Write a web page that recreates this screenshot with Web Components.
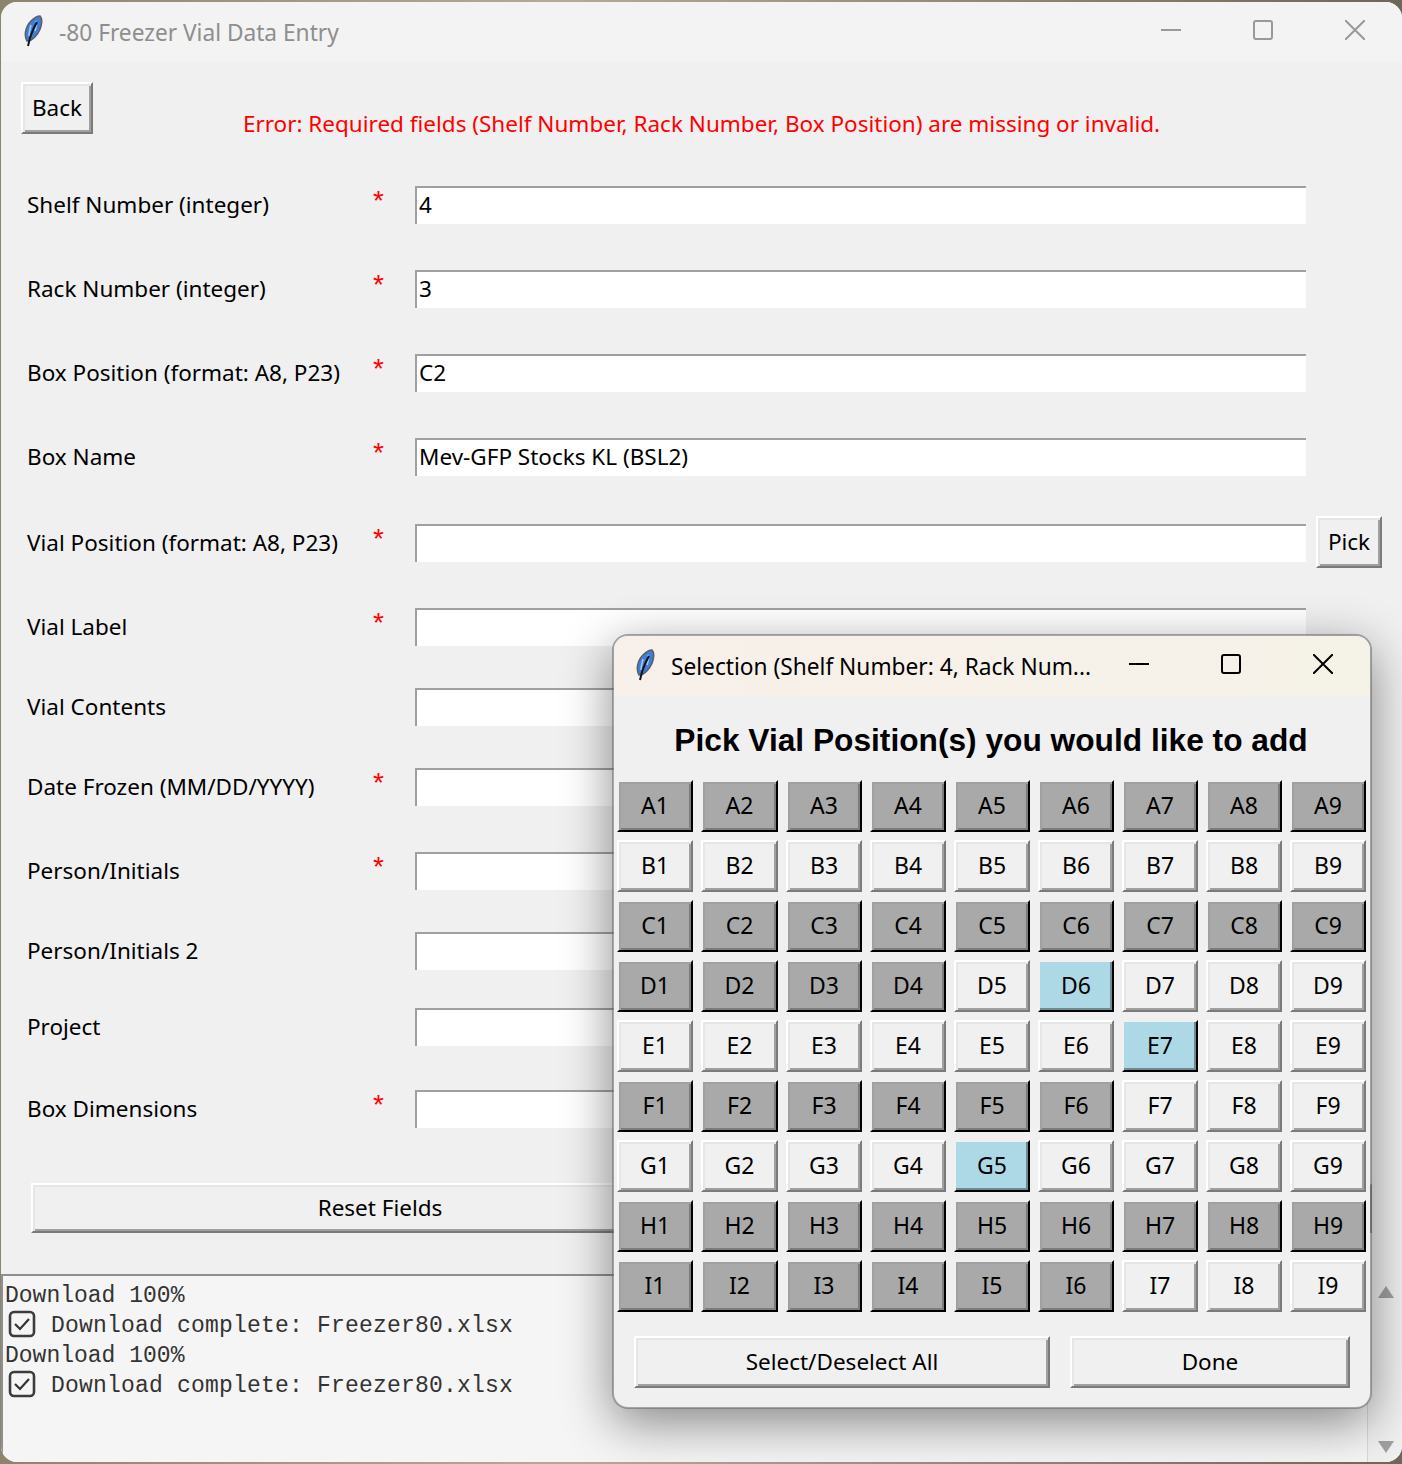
<!DOCTYPE html>
<html>
<head>
<meta charset="utf-8">
<title>-80 Freezer Vial Data Entry</title>
<style>
    html, body {
        margin: 0;
        height: 100%;
    }

    body {
        /* desktop wallpaper that peeks out round the window corners */
        background: linear-gradient(90deg, #8d8470, #b3ab98 40%, #6e6656);
        font-family: "Noto Sans", "Liberation Sans", sans-serif;
        font-size: 22.5px;
        overflow: hidden;
    }
</style>
</head>
<body>
<app-window>
    <title-bar slot="title" text="-80 Freezer Vial Data Entry" inactive></title-bar>

    <page-header slot="main" message="Error: Required fields (Shelf Number, Rack Number, Box Position) are missing or invalid."></page-header>

    <form-row slot="main" label="Shelf Number (integer)" value="4" required style="--row: 84px"></form-row>
    <form-row slot="main" label="Rack Number (integer)" value="3" required style="--row: 84px"></form-row>
    <form-row slot="main" label="Box Position (format: A8, P23)" value="C2" required style="--row: 84px"></form-row>
    <form-row slot="main" label="Box Name" value="Mev-GFP Stocks KL (BSL2)" required style="--row: 86px"></form-row>
    <form-row slot="main" label="Vial Position (format: A8, P23)" required style="--row: 84px">
        <win-button slot="action" style="width: 66px; height: 52px">Pick</win-button>
    </form-row>
    <form-row slot="main" label="Vial Label" required style="--row: 80px"></form-row>
    <form-row slot="main" label="Vial Contents" style="--row: 80px"></form-row>
    <form-row slot="main" label="Date Frozen (MM/DD/YYYY)" required style="--row: 84px"></form-row>
    <form-row slot="main" label="Person/Initials" required style="--row: 80px"></form-row>
    <form-row slot="main" label="Person/Initials 2" style="--row: 76px"></form-row>
    <form-row slot="main" label="Project" style="--row: 82px"></form-row>
    <form-row slot="main" label="Box Dimensions" required style="--row: 93px"></form-row>

    <action-row slot="main">
        <win-button style="width: 698px; height: 50px">Reset Fields</win-button>
        <win-button style="flex: 1; height: 50px"></win-button>
    </action-row>

    <log-panel slot="log"></log-panel>

    <vial-dialog slot="overlay"></vial-dialog>
</app-window>

<script>
// the tk feather icon, used in both title bars
const FEATHER_SVG = `
    <svg viewBox="0 0 20 32" width="20" height="32" aria-hidden="true">
        <path d="M4 26 C1 21 2 12 8 6 C11 3 14 1 17 1 C19 3 19 7 18 11 C17 16 13 22 8 25 C7 26 5 26 4 26 Z"
              fill="#3f7fd6" stroke="#5a5f68" stroke-width="1.6"/>
        <path d="M8 10 C7 14 6 18 6 21 M13 6 C14 9 13 13 12 16" stroke="#a4c6f0" stroke-width="1.6" fill="none"/>
        <path d="M5 31 L7 23 C9 17 11 12 14 7" stroke="#10161f" stroke-width="2" fill="none"/>
    </svg>`;

// (ROOT) the main window, everything else is slotted into it
class AppWindow extends HTMLElement {
    constructor() {
        super();
        this.attachShadow({ mode: 'open' });
        this.shadowRoot.innerHTML = `
        <style>
            :host {
                display: flex;
                flex-direction: column;
                position: relative;
                height: 1460px;
                margin: 2px 0 2px 1px;
                background: #f0f0f0;
                border-radius: 16px;
                overflow: hidden;
                color: #000;
            }

            main {
                flex: 1;
                padding: 20px 0 0 0;
            }
        </style>

        <slot name="title"></slot>
        <main><slot name="main"></slot></main>
        <slot name="log"></slot>
        <slot name="overlay"></slot>
        `;
    }
}

// window caption with icon, text and the three controls
class TitleBar extends HTMLElement {
    constructor() {
        super();
        this.attachShadow({ mode: 'open' });
        this.shadowRoot.innerHTML = `
        <style>
            :host {
                display: flex;
                align-items: center;
                flex: none;
                height: 60px;
                padding: 0 37px 0 22px;
                background: #f3f3f3;
                color: #000;
                font-size: 22.7px;
                --ctl: #000;
            }

            :host([inactive]) {
                color: #8e8e8e;
                --ctl: #999;
            }

            :host([dialog]) {
                padding-left: 21px;
                background: linear-gradient(90deg, #f8f0ea, #f5f2e8);
            }

            .icon {
                flex: none;
                width: 20px;
                height: 32px;
                transform: translateY(-1px);
            }

            .text {
                margin-left: 16px;
                white-space: nowrap;
            }

            .controls {
                display: flex;
                gap: 72px;
                margin-left: auto;
                transform: translateY(-2px);
            }

            svg.ctl {
                display: block;
                width: 20px;
                height: 20px;
                fill: none;
                stroke: var(--ctl);
                stroke-width: 2;
            }
        </style>

        <span class="icon">${FEATHER_SVG}</span>
        <span class="text"></span>
        <div class="controls">
            <svg class="ctl" viewBox="0 0 20 20"><path d="M0 10 H20"/></svg>
            <svg class="ctl" viewBox="0 0 20 20"><rect x="1" y="1" width="18" height="18" rx="2"/></svg>
            <svg class="ctl" viewBox="0 0 20 20"><path d="M0 0 L20 20 M20 0 L0 20"/></svg>
        </div>
        `;
    }

    connectedCallback() {
        this.shadowRoot.querySelector('.text').textContent = this.getAttribute('text');
    }
}

// tk style raised button, tone can be normal (default), used or picked
class WinButton extends HTMLElement {
    constructor() {
        super();
        this.attachShadow({ mode: 'open' });
        this.shadowRoot.innerHTML = `
        <style>
            :host {
                display: flex;
                align-items: center;
                justify-content: center;
                box-sizing: border-box;
                padding-bottom: 2px;
                background: #f0f0f0;
                border: 2px solid;
                border-color: #fff #7a7a7a #7a7a7a #fff;
                box-shadow: inset 2px 2px 0 #e6e6e6, inset -2px -2px 0 #a0a0a0;
                color: #000;
                white-space: nowrap;
            }

            :host([tone="used"]) {
                background: #a9a9a9;
                border-color: #f0f0f0 #000 #000 #f0f0f0;
                box-shadow: inset 2px 2px 0 #a0a0a0, inset -2px -2px 0 #7c7c7c;
            }

            :host([tone="picked"]) {
                background: #add8e6;
                border-color: #f0f0f0 #000 #000 #f0f0f0;
                box-shadow: inset -2px -2px 0 #6f8a93;
            }
        </style>

        <slot></slot>
        `;
    }
}

// back button and the validation message, the message is centred on the whole window
class PageHeader extends HTMLElement {
    constructor() {
        super();
        this.attachShadow({ mode: 'open' });
        this.shadowRoot.innerHTML = `
        <style>
            :host {
                display: grid;
                grid-template-rows: 52px;
                height: 52px;
                margin-bottom: 52px;
            }

            win-button, .error {
                grid-area: 1 / 1;
            }

            win-button {
                justify-self: start;
                margin-left: 20px;
                width: 72px;
            }

            .error {
                justify-self: center;
                margin-top: 26px;
                color: #f00;
                white-space: nowrap;
            }
        </style>

        <win-button>Back</win-button>
        <div class="error"></div>
        `;
    }

    connectedCallback() {
        this.shadowRoot.querySelector('.error').textContent = this.getAttribute('message');
    }
}

// one label / asterisk / entry line of the form
class FormRow extends HTMLElement {
    constructor() {
        super();
        this.attachShadow({ mode: 'open' });
        this.shadowRoot.innerHTML = `
        <style>
            :host {
                display: grid;
                grid-template-columns: 345px 43px 891px 66px;
                grid-template-rows: 38px;
                align-items: center;
                height: var(--row);
                padding-left: 26px;
            }

            .label {
                margin-top: -2px;
            }

            .star {
                color: #f00;
                font-size: 28px;
                font-family: "Liberation Sans", sans-serif;
                transform: translate(1px, -4px);
            }

            .entry {
                box-sizing: border-box;
                height: 38px;
                padding-left: 2px;
                line-height: 34px;
                background: #fff;
                border-top: 2px solid #a0a0a0;
                border-left: 2px solid #a0a0a0;
                white-space: nowrap;
            }

            .action {
                margin-left: 10px;
                width: 66px;
            }

            ::slotted(win-button) {
                margin-top: -2px;
            }
        </style>

        <div class="label"></div>
        <div class="star"></div>
        <div class="entry"></div>
        <div class="action"><slot name="action"></slot></div>
        `;
    }

    connectedCallback() {
        this.shadowRoot.querySelector('.label').textContent = this.getAttribute('label');
        this.shadowRoot.querySelector('.entry').textContent = this.getAttribute('value') || '';
        this.shadowRoot.querySelector('.star').textContent = this.hasAttribute('required') ? '*' : '';
    }
}

// the reset / submit line below the form
class ActionRow extends HTMLElement {
    constructor() {
        super();
        this.attachShadow({ mode: 'open' });
        this.shadowRoot.innerHTML = `
        <style>
            :host {
                display: flex;
                gap: 8px;
                width: 1341px;
                margin-left: 30px;
            }
        </style>

        <slot></slot>
        `;
    }
}

// download console at the bottom of the window, with its scrollbar
class LogPanel extends HTMLElement {
    constructor() {
        super();

        const check = `
            <svg viewBox="0 0 28 28" width="28" height="28" aria-hidden="true">
                <rect x="2" y="2" width="24" height="24" rx="4" fill="none" stroke="#3c3c3c" stroke-width="2.6"/>
                <path d="M7 14 L12 19 L21 9" fill="none" stroke="#333" stroke-width="2.2"/>
            </svg>`;

        this.attachShadow({ mode: 'open' });
        this.shadowRoot.innerHTML = `
        <style>
            :host {
                display: flex;
                flex: none;
                height: 188px;
            }

            .text {
                flex: 1;
                box-sizing: border-box;
                padding: 5px 0 0 2px;
                background: #f5f5f5;
                border-top: 2px solid #8f8f8f;
                border-left: 2px solid #8f8f8f;
                border-right: 1px solid #d8d8d8;
                font-family: "Liberation Mono", monospace;
                font-size: 23px;
                line-height: 30px;
                color: #333;
            }

            .line {
                display: flex;
                align-items: center;
                height: 30px;
                white-space: pre;
            }

            .line span {
                letter-spacing: 0.2px;
            }

            .line svg {
                flex: none;
                margin: -4px 15px 0 3px;
            }

            .scrollbar {
                display: flex;
                flex-direction: column;
                justify-content: space-between;
                align-items: center;
                box-sizing: border-box;
                flex: none;
                width: 34px;
                padding: 12px 0 9px 1px;
                background: #f0f0f0;
            }

            svg.arrow {
                display: block;
                fill: #a0a0a0;
            }
        </style>

        <div class="text">
            <div class="line">Download 100%</div>
            <div class="line">${check}<span>Download complete: Freezer80.xlsx</span></div>
            <div class="line">Download 100%</div>
            <div class="line">${check}<span>Download complete: Freezer80.xlsx</span></div>
        </div>
        <div class="scrollbar">
            <svg class="arrow" viewBox="0 0 16 12" width="16" height="12"><path d="M8 0 L16 12 H0 Z"/></svg>
            <svg class="arrow" viewBox="0 0 16 12" width="16" height="12"><path d="M0 0 H16 L8 12 Z"/></svg>
        </div>
        `;
    }
}

// 9x9 grid of positions, tones come from the rows below
class VialGrid extends HTMLElement {
    constructor() {
        super();

        // u = used, n = free, p = picked
        const rows = {
            A: 'uuuuuuuuu',
            B: 'nnnnnnnnn',
            C: 'uuuuuuuuu',
            D: 'uuuunpnnn',
            E: 'nnnnnnpnn',
            F: 'uuuuuunnn',
            G: 'nnnnpnnnn',
            H: 'uuuuuuuuu',
            I: 'uuuuuunnn',
        };
        const tones = { u: 'used', n: 'normal', p: 'picked' };

        let buttons = '';
        Object.keys(rows).forEach((row) => {
            rows[row].split('').forEach((state, i) => {
                buttons += `<win-button tone="${tones[state]}">${row}${i + 1}</win-button>`;
            });
        });

        this.attachShadow({ mode: 'open' });
        this.shadowRoot.innerHTML = `
        <style>
            :host {
                display: grid;
                grid-template-columns: 76px 77px repeat(7, 76px);
                grid-auto-rows: 52px;
                gap: 8px;
                padding-left: 3px;
                font-size: 23px;
            }
        </style>

        ${buttons}
        `;
    }
}

// the floating picker window
class VialDialog extends HTMLElement {
    constructor() {
        super();
        this.attachShadow({ mode: 'open' });
        this.shadowRoot.innerHTML = `
        <style>
            :host {
                display: block;
                position: absolute;
                left: 611px;
                top: 632px;
                box-sizing: border-box;
                width: 760px;
                height: 775px;
                background: #f0f0f0;
                background-clip: padding-box;
                border: 2px solid rgba(110, 110, 110, 0.6);
                border-radius: 16px;
                box-shadow: 0 14px 50px rgba(0, 0, 0, 0.45);
                overflow: hidden;
            }

            h1 {
                display: flex;
                align-items: center;
                justify-content: center;
                box-sizing: border-box;
                height: 84px;
                margin: 0;
                padding: 4px 2px 0 0;
                font-family: "Liberation Sans", sans-serif;
                font-size: 31.7px;
                font-weight: bold;
                white-space: nowrap;
            }

            .buttons {
                display: flex;
                gap: 20px;
                margin: 24px 0 0 20px;
            }
        </style>

        <title-bar dialog text="Selection (Shelf Number: 4, Rack Num..."></title-bar>
        <h1>Pick Vial Position(s) you would like to add</h1>
        <vial-grid></vial-grid>
        <div class="buttons">
            <win-button style="width: 416px; height: 52px">Select/Deselect All</win-button>
            <win-button style="width: 280px; height: 52px">Done</win-button>
        </div>
        `;
    }
}

// set the element names for our components
customElements.define('app-window', AppWindow);
customElements.define('title-bar', TitleBar);
customElements.define('win-button', WinButton);
customElements.define('page-header', PageHeader);
customElements.define('form-row', FormRow);
customElements.define('action-row', ActionRow);
customElements.define('log-panel', LogPanel);
customElements.define('vial-grid', VialGrid);
customElements.define('vial-dialog', VialDialog);
</script>
</body>
</html>
